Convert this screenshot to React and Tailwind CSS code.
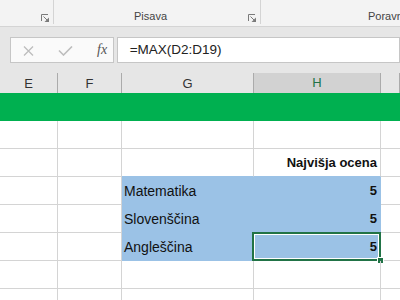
import React from "react";

function Launcher() {
  return (
    <svg width="8" height="8" viewBox="0 0 8 8" className="block">
      <path d="M0.5 7V0.5H7" fill="none" stroke="#7a7a7a" strokeWidth="1" />
      <path d="M2.5 2.5L6 6" fill="none" stroke="#7a7a7a" strokeWidth="1" />
      <polygon points="8,3.5 8,8 3.5,8" fill="#7a7a7a" />
    </svg>
  );
}

const cols = ["E", "F", "G", "H", ""];

const rows = [
  {},
  { h: { t: "Najvišja ocena", b: true } },
  { g: "Matematika", h: { t: "5", b: true }, blue: true },
  { g: "Slovenščina", h: { t: "5", b: true }, blue: true },
  { g: "Angleščina", h: { t: "5", b: true }, blue: true, sel: true },
  {},
  {},
];

export default function App() {
  return (
    <div
      className="w-[400px] h-[300px] overflow-hidden bg-white flex flex-col"
      style={{ fontFamily: '"Liberation Sans", Arial, sans-serif' }}
    >
      {/* Ribbon */}
      <div className="h-[27px] shrink-0 bg-[#f3f3f3] border-b border-[#d4d4d4] flex items-start">
        <div className="w-[53px] h-[24px] flex items-end justify-end pr-[4px] pb-[2px]">
          <Launcher />
        </div>
        <div className="w-px h-[24px] bg-[#d4d4d4]" />
        <div className="w-[206px] h-[24px] flex items-end pb-[1px]">
          <span className="ml-[80px] text-[11px] leading-[13px] text-[#444]">Pisava</span>
          <div className="ml-auto mr-[4px] mb-[1px]">
            <Launcher />
          </div>
        </div>
        <div className="w-px h-[24px] bg-[#d4d4d4]" />
        <div className="flex-1 h-[24px] flex items-end pb-[1px] overflow-hidden">
          <span className="ml-[107px] text-[11px] leading-[13px] text-[#444] whitespace-nowrap">Poravn</span>
        </div>
      </div>

      {/* Formula bar */}
      <div className="h-[46px] shrink-0 bg-[#e6e6e6] flex items-start pt-[10px]">
        <div className="ml-[10px] w-[110px] h-[26px] bg-[#fafafa] border border-[#c6c6c6] relative">
          <svg className="absolute left-[12px] top-[8px]" width="11" height="10" viewBox="0 0 11 10">
            <path d="M1 0.5L10 9.5M10 0.5L1 9.5" stroke="#bdbdbd" strokeWidth="1.3" />
          </svg>
          <svg className="absolute left-[47px] top-[8px]" width="15" height="10" viewBox="0 0 15 10">
            <path d="M1 4.5L5.5 9L14 0.5" fill="none" stroke="#bdbdbd" strokeWidth="1.6" />
          </svg>
          <span
            className="absolute left-[86px] top-[4px] text-[14px] leading-[16px] italic text-[#555]"
            style={{ fontFamily: '"Liberation Serif", "Times New Roman", serif' }}
          >
            fx
          </span>
        </div>
        <div className="ml-[3px] w-[300px] h-[26px] bg-white border border-[#c6c6c6] flex items-center pl-[12px]">
          <span className="text-[13.5px] leading-[16px] text-[#222]">=MAX(D2:D19)</span>
        </div>
      </div>

      {/* Column headers */}
      <div className="h-[20px] shrink-0 bg-[#e6e6e6] grid grid-cols-[58px_64px_132px_127px_1fr]">
        {cols.map((c, i) => (
          <div
            key={i}
            className={
              c === "H"
                ? "flex items-center justify-center bg-[#d2d2d2] border-r border-[#ababab] border-b-2 border-b-[#217346] text-[13px] text-[#217346]"
                : "flex items-center justify-center border-r border-[#ababab] text-[13px] text-[#333]"
            }
          >
            {c}
          </div>
        ))}
      </div>

      {/* Green row */}
      <div className="h-[28px] shrink-0 bg-[#00b050]" />

      {/* Grid rows */}
      {rows.map((r, ri) => {
        const nextBlue = rows[ri + 1] && rows[ri + 1].blue;
        return (
          <div key={ri} className="h-[28px] shrink-0 grid grid-cols-[58px_64px_132px_127px_1fr]">
            <div className="border-r border-b border-[#d4d4d4]" />
            <div className="border-r border-b border-[#d4d4d4]" />
            <div
              className={
                r.blue
                  ? "bg-[#9bc2e6] border-r border-b border-[#9bc2e6] flex items-end pb-[5px] pl-[2px] text-[14px] leading-[16px] text-[#111]"
                  : nextBlue
                  ? "border-r border-b border-r-[#d4d4d4] border-b-[#9bc2e6]"
                  : "border-r border-b border-[#d4d4d4]"
              }
            >
              {r.g}
            </div>
            <div
              className={
                (r.blue
                  ? "bg-[#9bc2e6] border-r border-b border-[#9bc2e6]"
                  : nextBlue
                  ? "border-r border-b border-r-[#d4d4d4] border-b-[#9bc2e6]"
                  : "border-r border-b border-[#d4d4d4]") +
                " relative flex items-end justify-end pb-[5px] pr-[3px] text-[13px] leading-[16px] text-[#111]" +
                (r.h && r.h.b ? " font-bold" : "")
              }
            >
              {r.h && r.h.t}
              {r.sel && (
                <>
                  <div className="absolute left-[-2px] top-[-1px] right-[-1px] bottom-[-1px] border-2 border-[#217346] pointer-events-none">
                    <div className="w-full h-full border border-white" />
                  </div>
                  <div className="absolute right-[-4px] bottom-[-4px] w-[7px] h-[7px] bg-[#217346] border border-white" />
                </>
              )}
            </div>
            <div className="border-b border-[#d4d4d4]" />
          </div>
        );
      })}
    </div>
  );
}
